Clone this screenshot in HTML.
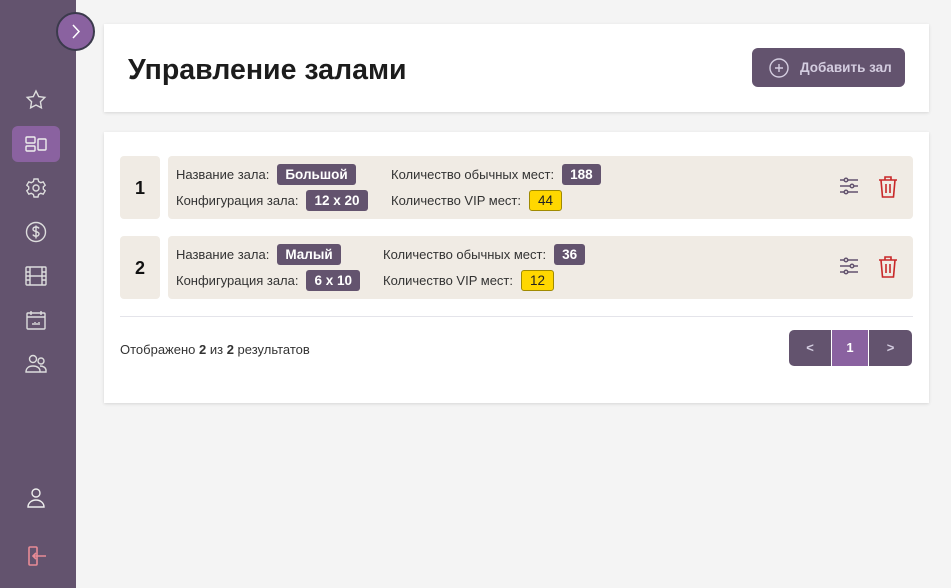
<!DOCTYPE html>
<html><head><meta charset="utf-8"><style>
*{box-sizing:border-box;margin:0;padding:0}
body{width:951px;height:588px;background:#f4f4f4;font-family:"Liberation Sans",sans-serif;position:relative;overflow:hidden;color:#333}
.sb{position:absolute;left:0;top:0;width:76px;height:588px;background:#63536e}
.tog{position:absolute;left:56px;top:12px;width:39px;height:39px;border-radius:50%;background:#8a62a0;border:2px solid #3b3a4c}
.ic{position:absolute;left:24px;width:24px;height:24px}
.act{position:absolute;left:12px;top:126px;width:48px;height:36px;border-radius:6px;background:#8a62a0}
.card{position:absolute;left:104px;width:825px;background:#fff;box-shadow:0 1px 3px rgba(0,0,0,.12)}
h1{position:absolute;left:24px;top:30px;font-size:28.5px;font-weight:bold;color:#1c1c1c}
.btn{position:absolute;left:648px;top:24px;width:153px;height:39px;border-radius:6px;background:#63536e;color:#d4cde0;font-weight:bold;font-size:13.5px;line-height:39px;padding-left:48px}
.num{position:absolute;left:16px;width:40px;height:63px;background:#f0ebe4;border-radius:4px;font-weight:bold;font-size:18px;text-align:center;line-height:64px;color:#111}
.info{position:absolute;left:64px;width:745px;height:63px;background:#f0ebe4;border-radius:4px;font-size:13px;color:#333}
.l{position:absolute;white-space:nowrap}
.b{display:inline-block;background:#63536e;color:#fff;font-weight:bold;font-size:13.5px;border-radius:3px;padding:0 8px;height:21px;line-height:21px;margin-left:8px}
.y{display:inline-block;background:#ffd700;border:1px solid #a08a00;color:#222;font-size:13.5px;border-radius:3px;padding:0 8px;height:21px;line-height:19px;margin-left:8px}
.pg{position:absolute;top:198px;height:36px;color:#d4cde0;font-weight:bold;font-size:13px;text-align:center;line-height:36px;background:#63536e}
</style></head><body>
<div class="sb">
<div class="act"></div>
<svg class="ic" style="top:88px" viewBox="0 0 24 24" fill="none" stroke="#ddd" stroke-width="1.4"><path d="M12 3l2.7 5.6 6.1.8-4.4 4.3 1 6.1L12 17l-5.4 2.8 1-6.1L3.2 9.4l6.1-.8z"/></svg>
<svg class="ic" style="top:132px" viewBox="0 0 24 24" fill="none" stroke="#eee" stroke-width="1.4"><rect x="2" y="5" width="9" height="6" rx="1"/><rect x="2" y="14" width="9" height="5" rx="1"/><rect x="14" y="7" width="8" height="11" rx="1"/></svg>
<svg class="ic" style="top:176px" viewBox="0 0 24 24" fill="none" stroke="#ddd" stroke-width="1.4"><circle cx="12" cy="12" r="3"/><path d="M10 3h4l.6 2.5 2.2 1.2 2.4-.9 2 3.4-1.9 1.7v2.2l1.9 1.7-2 3.4-2.4-.9-2.2 1.2L14 21h-4l-.6-2.5-2.2-1.2-2.4.9-2-3.4 1.9-1.7v-2.2L2.8 9.2l2-3.4 2.4.9 2.2-1.2z"/></svg>
<svg class="ic" style="top:220px" viewBox="0 0 24 24" fill="none" stroke="#ddd" stroke-width="1.4"><circle cx="12" cy="12" r="9.5"/><path d="M15 8.5c-.5-1-1.6-1.5-3-1.5-1.7 0-3 .8-3 2.3 0 3 6 1.5 6 4.6 0 1.4-1.3 2.3-3 2.3-1.5 0-2.6-.6-3.1-1.6M12 5.5v13"/></svg>
<svg class="ic" style="top:264px" viewBox="0 0 24 24" fill="none" stroke="#ddd" stroke-width="1.4"><rect x="2" y="3" width="20" height="18" rx="1"/><path d="M6 3v18M18 3v18M2 8h4M2 12h4M2 16h4M18 8h4M18 12h4M18 16h4M6 12h12"/></svg>
<svg class="ic" style="top:308px" viewBox="0 0 24 24" fill="none" stroke="#ddd" stroke-width="1.4"><rect x="3" y="5" width="18" height="16" rx="1"/><path d="M3 9h18M7 3v4M17 3v4M9 17v-2M11 17v-3M13 17v-2M15 17v-3"/></svg>
<svg class="ic" style="top:352px" viewBox="0 0 24 24" fill="none" stroke="#ddd" stroke-width="1.4"><circle cx="9" cy="7" r="3.5"/><circle cx="17" cy="9" r="3"/><path d="M2 20c0-4 3-6 7-6s7 2 7 5v1zM16 14c3 0 6 1.5 6 4.5v1.5h-6"/></svg>
<svg class="ic" style="top:486px" viewBox="0 0 24 24" fill="none" stroke="#eee" stroke-width="1.4"><circle cx="12" cy="7" r="4"/><path d="M4 21c0-4 3.5-7 8-7s8 3 8 7z"/></svg>
<svg class="ic" style="top:544px" viewBox="0 0 24 24" fill="none" stroke="#e88b96" stroke-width="1.6"><rect x="5" y="3" width="8" height="18" rx="1"/><path d="M9 12h13M12 9l-3 3 3 3"/></svg>
</div>
<div class="tog"><svg width="35" height="35" viewBox="0 0 35 35" fill="none" stroke="#fff" stroke-width="1.5"><path d="M15 11l6 6.5-6 6.5"/></svg></div>

<div class="card" style="top:24px;height:88px">
<h1>Управление залами</h1>
<div class="btn"><svg style="position:absolute;left:17px;top:10px" width="20" height="20" viewBox="0 0 20 20" fill="none" stroke="#d4cde0" stroke-width="1.4"><circle cx="10" cy="10" r="9"/><path d="M10 6v8M6 10h8"/></svg>Добавить зал</div>
</div>

<div class="card" style="top:132px;height:271px">
<div class="num" style="top:24px">1</div>
<div class="info" style="top:24px">
<div class="l" style="left:8px;top:8px">Название зала:<span class="b">Большой</span></div>
<div class="l" style="left:8px;top:34px">Конфигурация зала:<span class="b">12 x 20</span></div>
<div class="l" style="left:223px;top:8px">Количество обычных мест:<span class="b">188</span></div>
<div class="l" style="left:223px;top:34px">Количество VIP мест:<span class="y">44</span></div>
</div>
<div class="num" style="top:104px">2</div>
<div class="info" style="top:104px">
<div class="l" style="left:8px;top:8px">Название зала:<span class="b">Малый</span></div>
<div class="l" style="left:8px;top:34px">Конфигурация зала:<span class="b">6 x 10</span></div>
<div class="l" style="left:215px;top:8px">Количество обычных мест:<span class="b">36</span></div>
<div class="l" style="left:215px;top:34px">Количество VIP мест:<span class="y">12</span></div>
</div>
<svg style="position:absolute;left:734px;top:44px" width="22" height="22" viewBox="0 0 22 22" fill="none" stroke="#63536e" stroke-width="1.5"><path d="M2 4h18M2 10h18M2 16h18"/><circle cx="8" cy="4" r="1.8" fill="#f0ebe4"/><circle cx="14" cy="10" r="1.8" fill="#f0ebe4"/><circle cx="8" cy="16" r="1.8" fill="#f0ebe4"/></svg>
<svg style="position:absolute;left:773px;top:43px" width="22" height="24" viewBox="0 0 22 24" fill="none" stroke="#c82828" stroke-width="1.6"><path d="M2 5h18M8 5V2h6v3M4 5l1.5 17h11L18 5M9 9v9M13 9v9"/></svg>
<svg style="position:absolute;left:734px;top:124px" width="22" height="22" viewBox="0 0 22 22" fill="none" stroke="#63536e" stroke-width="1.5"><path d="M2 4h18M2 10h18M2 16h18"/><circle cx="8" cy="4" r="1.8" fill="#f0ebe4"/><circle cx="14" cy="10" r="1.8" fill="#f0ebe4"/><circle cx="8" cy="16" r="1.8" fill="#f0ebe4"/></svg>
<svg style="position:absolute;left:773px;top:123px" width="22" height="24" viewBox="0 0 22 24" fill="none" stroke="#c82828" stroke-width="1.6"><path d="M2 5h18M8 5V2h6v3M4 5l1.5 17h11L18 5M9 9v9M13 9v9"/></svg>
<div style="position:absolute;left:16px;top:184px;width:793px;height:1px;background:#e4e4ea"></div>
<div class="l" style="left:16px;top:210px;font-size:13px">Отображено <b>2</b> из <b>2</b> результатов</div>
<div class="pg" style="left:685px;width:42px;border-radius:5px 0 0 5px">&lt;</div>
<div class="pg" style="left:727px;width:38px;background:#8a62a0;color:#fff;border-left:1px solid #fff;border-right:1px solid #fff">1</div>
<div class="pg" style="left:765px;width:43px;border-radius:0 5px 5px 0">&gt;</div>
</div>
</body></html>
